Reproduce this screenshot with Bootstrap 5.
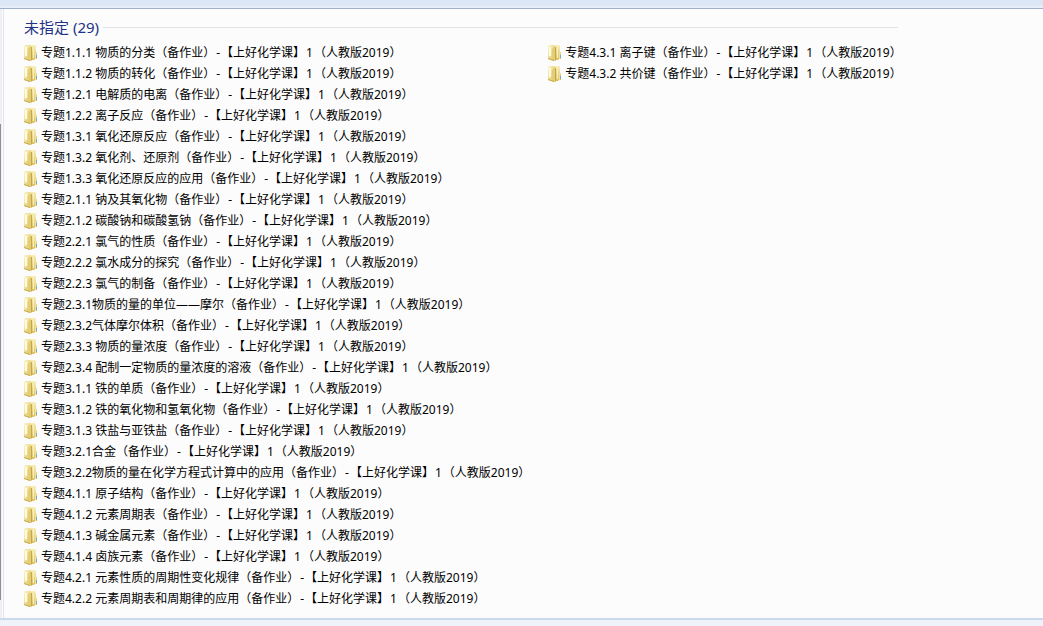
<!DOCTYPE html>
<html lang="zh-CN">
<head>
<meta charset="utf-8">
<meta name="viewport" content="width=device-width, initial-scale=1">
<title>未指定</title>
<link href="https://cdn.jsdelivr.net/npm/bootstrap@5.3.0/dist/css/bootstrap.min.css" rel="stylesheet">
<style>
body{font-family:"Noto Sans","Noto Sans CJK SC",sans-serif;font-size:12px;line-height:21px;color:#000;background:#fcfcfc}
.topbar{height:9px;background:linear-gradient(#dbe7f5 6px,#e6eef9 6px);border-bottom:1px solid #a0afcb}
.tree-edge{width:5px;background:linear-gradient(90deg,#f0f0f0 2px,#fcfcfc 2px,#fcfcfc 3px,#dbe5f3 3px,#dbe5f3 4px,#fcfcfc 4px)}
.tree-thumb{width:1px;background:#8f8f8f;margin-top:115px;margin-bottom:18px}
.pane{padding:6px 12px 9px 19px}
.group-title{font-size:15px;font-weight:400;line-height:24px;color:#1e3287}
.group-head{margin-bottom:3px}
.rule{height:1px;background:#e2e2e2}
.files{display:grid;grid-auto-flow:column;grid-template-rows:repeat(27,21px);grid-auto-columns:max-content;column-gap:18px}
.file{color:#000;gap:4px}
.file svg{width:13px;height:16px;flex:none}
.sep{margin:0 1px}
.statusbar{padding-top:6px;background:#eef3fa;border-top:2px solid #cbd9ec}
</style>
</head>
<body class="min-vh-100 d-flex flex-column">
<svg class="position-absolute" width="0" height="0" aria-hidden="true">
<defs>
<linearGradient id="back" x2="0" y2="1"><stop offset="0" stop-color="#f8efb8"/><stop offset="1" stop-color="#dcbf5c"/></linearGradient>
<linearGradient id="front" x2="1" y2="1"><stop offset="0" stop-color="#fcf6cd"/><stop offset="1" stop-color="#dcc05a"/></linearGradient>
</defs>
<symbol id="folder" viewBox="0 0 13 16">
<path d="M5 1l1-1h5l1 1v6h1v7h-2l-1 1H5z" fill="url(#back)"/>
<path d="M9 2h1v11H9z" fill="#f8efbd"/>
<path d="M7 2h1v13l-1 1z" fill="#c3a64a"/>
<path d="M0 1l1-1h5l1 1v14l-1 1-6-2z" fill="url(#front)"/>
<path d="M1 2h2v9H1z" fill="#fffbe0"/>
<path d="M4 4l3-3v14l-1 1-2-1z" fill="#e3cd75"/>
<path d="M0 13l6 2v1l-6-2z" fill="#c6aa4c"/>
<path d="M11 7h1v7h-1z" fill="#f1e09b"/>
<path d="M12 10h1v3h-1z" fill="#69abd9"/>
</symbol>
</svg>
<header class="topbar"></header>
<div class="d-flex flex-grow-1">
<div class="tree-edge d-flex flex-shrink-0"><div class="tree-thumb"></div></div>
<main class="pane">
<section>
<div class="group-head d-flex align-items-center gap-1"><h1 class="group-title mb-0 text-nowrap">未指定 (29)</h1><div class="rule flex-grow-1 me-1"></div></div>
<ul class="files list-unstyled mb-0" id="files"></ul>
</section>
</main>
</div>
<footer class="statusbar"></footer>
<script src="https://cdn.jsdelivr.net/npm/bootstrap@5.3.0/dist/js/bootstrap.bundle.min.js"></script>
<script>
const names=["1.1.1 物质的分类","1.1.2 物质的转化","1.2.1 电解质的电离","1.2.2 离子反应","1.3.1 氧化还原反应","1.3.2 氧化剂、还原剂","1.3.3 氧化还原反应的应用","2.1.1 钠及其氧化物","2.1.2 碳酸钠和碳酸氢钠","2.2.1 氯气的性质","2.2.2 氯水成分的探究","2.2.3 氯气的制备","2.3.1物质的量的单位——摩尔","2.3.2气体摩尔体积","2.3.3 物质的量浓度","2.3.4 配制一定物质的量浓度的溶液","3.1.1 铁的单质","3.1.2 铁的氧化物和氢氧化物","3.1.3 铁盐与亚铁盐","3.2.1合金","3.2.2物质的量在化学方程式计算中的应用","4.1.1 原子结构","4.1.2 元素周期表","4.1.3 碱金属元素","4.1.4 卤族元素","4.2.1 元素性质的周期性变化规律","4.2.2 元素周期表和周期律的应用","4.3.1 离子键","4.3.2 共价键"];
document.getElementById("files").innerHTML=names.map(n=>`<li><a href="#" class="file d-flex align-items-center text-decoration-none text-nowrap"><svg aria-hidden="true"><use href="#folder"/></svg><span>专题${n}（备作业）<span class="sep">-</span>【上好化学课】<span class="sep">1</span>（人教版2019）</span></a></li>`).join("");
</script>
</body>
</html>
